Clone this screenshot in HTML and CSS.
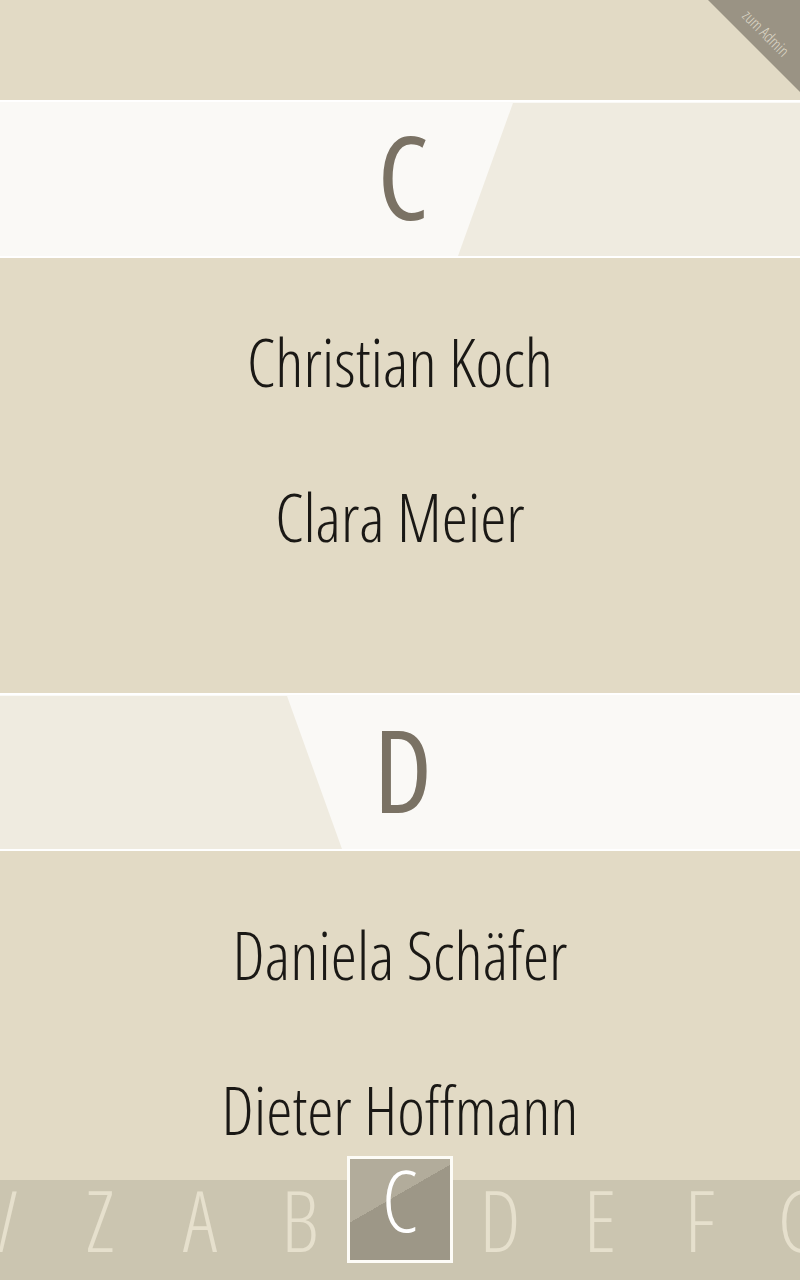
FILE: index.html
```html
<!DOCTYPE html>
<html lang="de">
<head>
<meta charset="utf-8">
<title>Kontakte</title>
<link rel="stylesheet" href="styles.css">
</head>
<body>
<header class="top">
  <a class="admin-corner" href="#"><span class="admin-label">zum Admin</span></a>
</header>

<section class="group">
  <h2 class="group-head head-right"><span class="head-letter">C</span></h2>
  <ul class="names">
    <li class="name">Christian Koch</li>
    <li class="name">Clara Meier</li>
  </ul>
</section>

<section class="group">
  <h2 class="group-head head-left"><span class="head-letter">D</span></h2>
  <ul class="names">
    <li class="name">Daniela Schäfer</li>
    <li class="name">Dieter Hoffmann</li>
  </ul>
</section>

<nav class="alphabet">
  <span class="alpha">V</span>
  <span class="alpha">Z</span>
  <span class="alpha">A</span>
  <span class="alpha">B</span>
  <span class="alpha alpha-current"><span class="alpha-box">C</span></span>
  <span class="alpha">D</span>
  <span class="alpha">E</span>
  <span class="alpha">F</span>
  <span class="alpha">G</span>
</nav>
</body>
</html>
```

FILE: styles.css
```css
html, body {
  margin: 0;
  padding: 0;
}

body {
  background: #e2dac5;
  font-family: "Open Sans", "Liberation Sans", sans-serif;
  font-stretch: 75%;
  overflow: hidden;
  height: 1280px;
}

.top {
  height: 100px;
  position: relative;
}

.admin-corner {
  position: absolute;
  top: 0;
  right: 0;
  width: 92px;
  height: 92px;
  background: #9a9384;
  clip-path: polygon(0 0, 100% 0, 100% 100%);
  text-decoration: none;
}

.admin-label {
  position: absolute;
  left: 16px;
  top: 24px;
  width: 84px;
  text-align: center;
  transform: rotate(45deg);
  color: #ddd7c7;
  font-size: 16px;
  font-stretch: 87.5%;
  font-weight: 300;
  line-height: 18px;
  white-space: nowrap;
}

.group {
  margin: 0;
}

.group-head {
  margin: 0;
  height: 154px;
  border-top: 2px solid #ffffff;
  border-bottom: 2px solid #ffffff;
  background: #faf9f6;
  position: relative;
  display: flex;
  align-items: center;
  justify-content: center;
}

.group-head::before {
  content: "";
  position: absolute;
  top: 1px;
  bottom: 0;
  background: #efebe0;
}

.head-right::before {
  left: 458px;
  right: 0;
  clip-path: polygon(55px 0, 100% 0, 100% 100%, 0 100%);
}

.head-left::before {
  left: 0;
  width: 342px;
  clip-path: polygon(0 0, 287px 0, 100% 100%, 0 100%);
}

.head-letter {
  position: relative;
  font-size: 115px;
  font-stretch: 80%;
  font-weight: 400;
  line-height: 154px;
  color: #7a7264;
  padding-left: 6px;
  margin-top: -7px;
}

.names {
  list-style: none;
  margin: 0;
  padding: 26px 0 99px;
}

.name {
  height: 155px;
  line-height: 155px;
  text-align: center;
  font-size: 66px;
  font-weight: 300;
  color: #1a1815;
}

.alphabet {
  position: fixed;
  left: 0;
  right: 0;
  bottom: 0;
  height: 100px;
  background: #cbc5b0;
  display: flex;
  margin-left: -50px;
}

.alpha {
  flex: 0 0 100px;
  text-align: center;
  font-size: 84px;
  font-stretch: 85%;
  font-weight: 300;
  line-height: 80px;
  color: #e6e0cd;
  position: relative;
}

.alpha-current {
  color: #ffffff;
}

.alpha-box {
  position: absolute;
  left: -3px;
  top: -24px;
  width: 100px;
  height: 101px;
  border: 3px solid #fdfcf7;
  background: linear-gradient(150deg, #b2ac9b 40%, #9d9787 40%);
  line-height: 81px;
  font-weight: 300;
}
```
